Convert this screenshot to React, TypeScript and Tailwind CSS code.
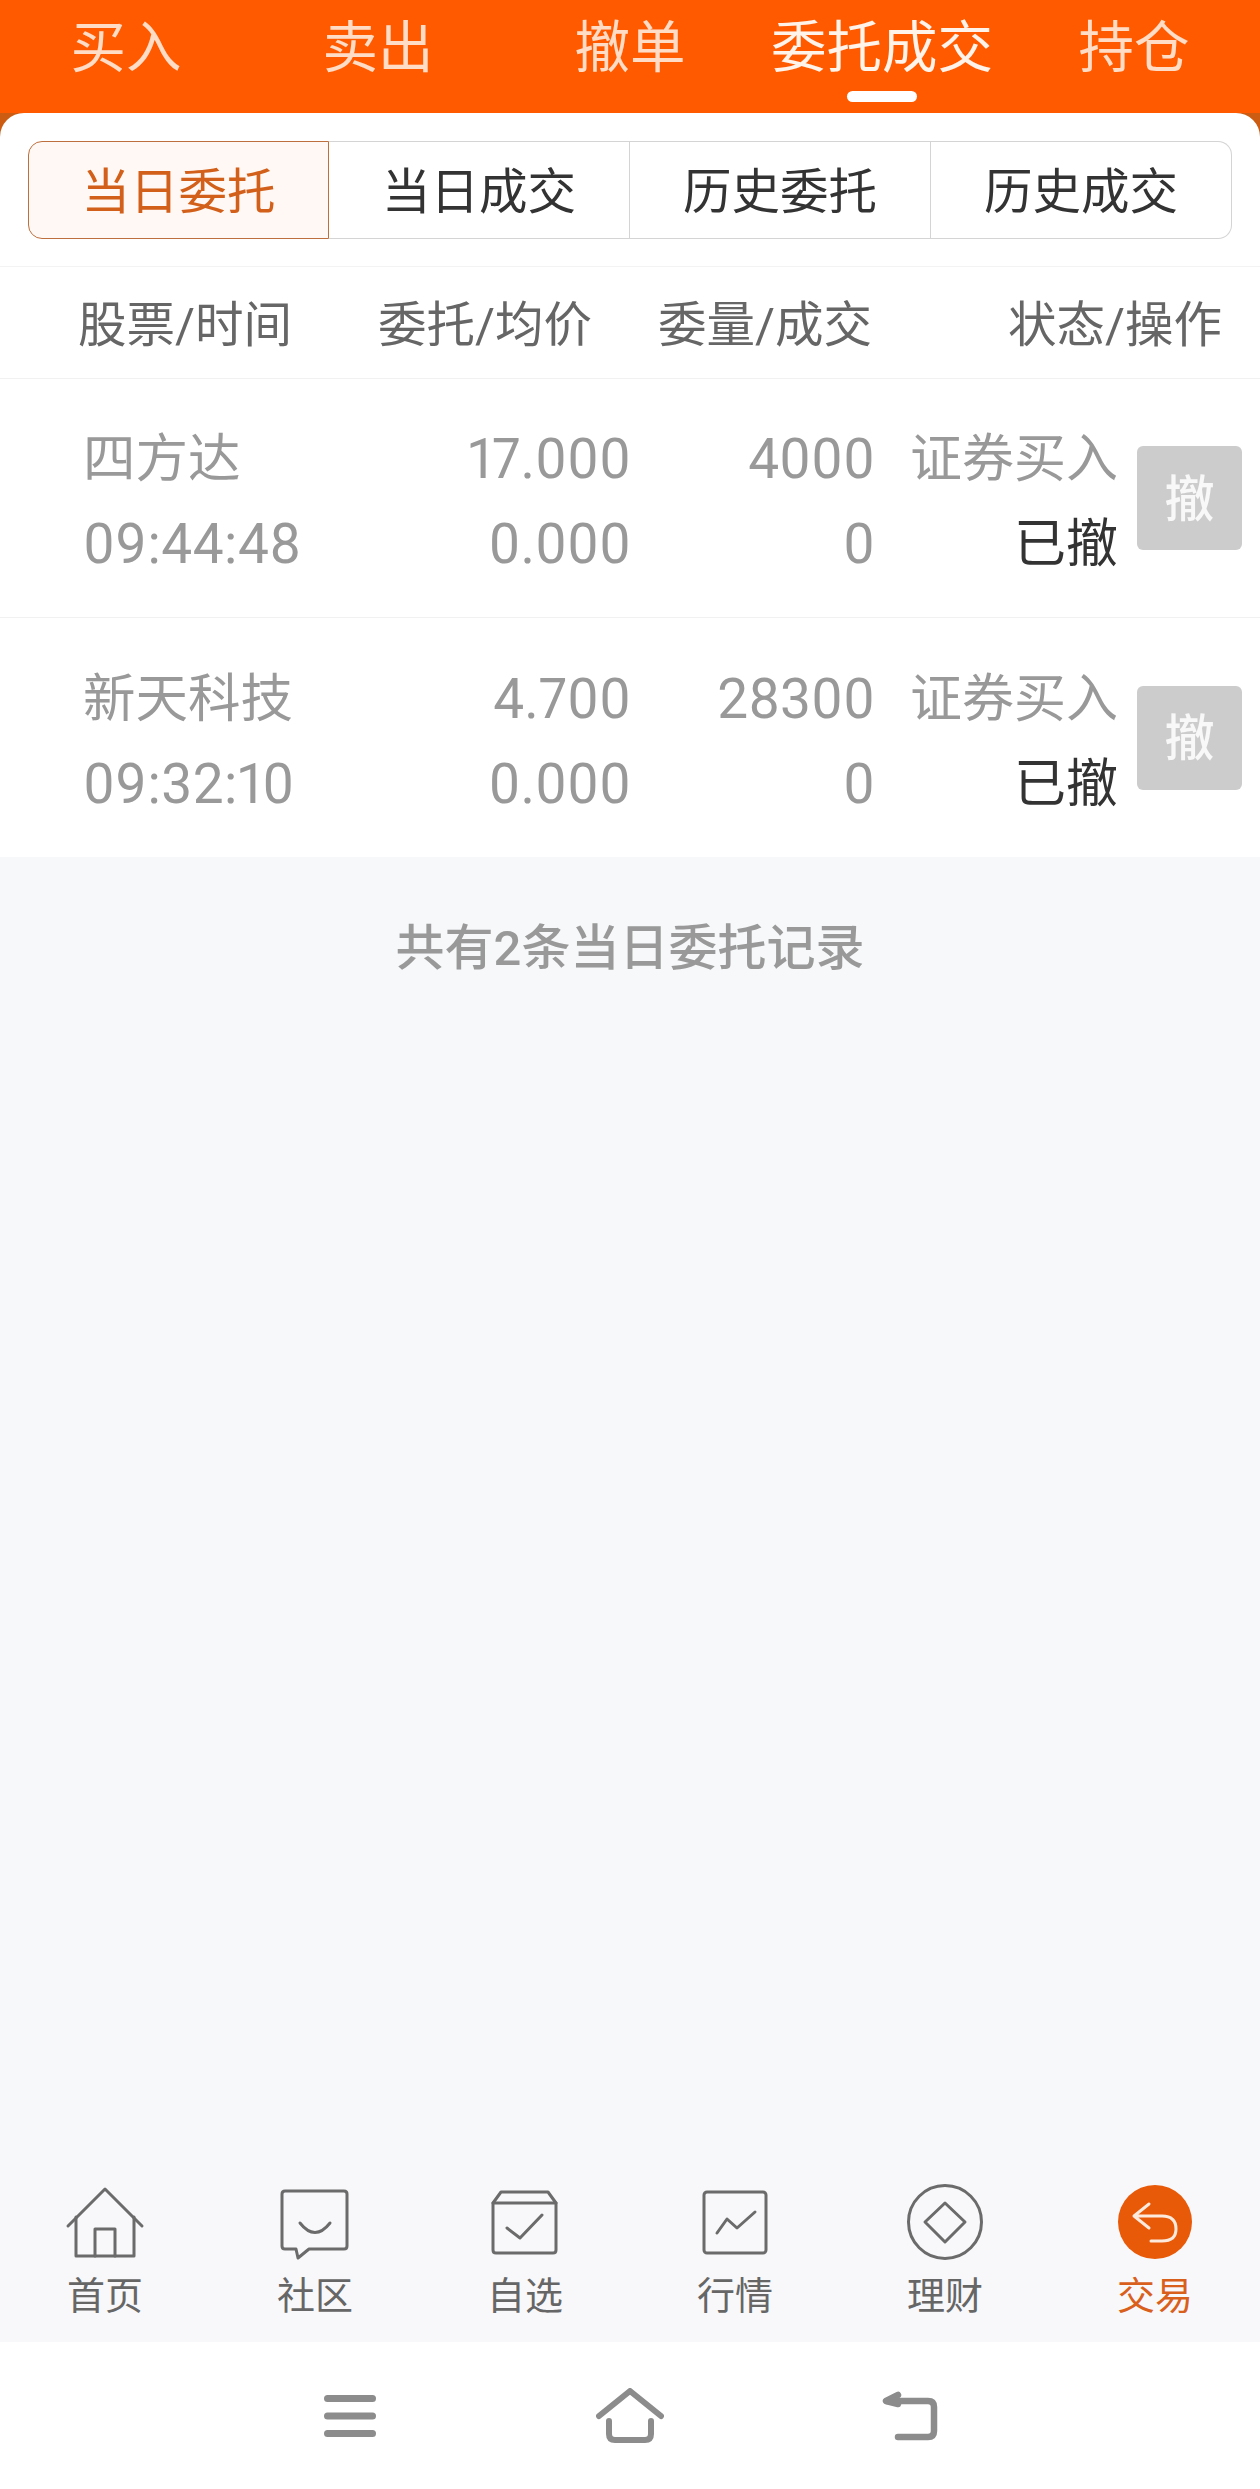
import React from "react";

const topTabs = ["买入", "卖出", "撤单", "委托成交", "持仓"];
const subTabs = ["当日委托", "当日成交", "历史委托", "历史成交"];
const rows = [
  { name: "四方达", time: "09:44:48", price: "17.000", avg: "0.000", qty: "4000", done: "0" },
  { name: "新天科技", time: "09:32:10", price: "4.700", avg: "0.000", qty: "28300", done: "0" },
];

const stroke = { fill: "none", stroke: "#6b6b6b", strokeWidth: 3, strokeLinejoin: "round" as const, strokeLinecap: "round" as const };

function HomeIcon() {
  return (
    <svg width="80" height="80" viewBox="0 0 80 80" {...stroke}>
      <path d="M3 45 L40 8 L77 45" />
      <path d="M11 36 V75 H69 V36" />
      <path d="M30 75 V48 H50 V75" />
    </svg>
  );
}
function ChatIcon() {
  return (
    <svg width="80" height="80" viewBox="0 0 80 80" {...stroke}>
      <path d="M10 10 H69 Q72 10 72 13 V65 Q72 68 69 68 H34 L23 77 L21 68 H10 Q7 68 7 65 V13 Q7 10 10 10 Z" />
      <path d="M25 42 Q40 61 55 42" />
    </svg>
  );
}
function BoxIcon() {
  return (
    <svg width="80" height="80" viewBox="0 0 80 80" {...stroke}>
      <path d="M8 22 L16 11 H63 L71 22" />
      <path d="M8 22 H71 V69 Q71 72 68 72 H11 Q8 72 8 69 Z" />
      <path d="M22 47 L35 57 L57 34" />
    </svg>
  );
}
function ChartIcon() {
  return (
    <svg width="80" height="80" viewBox="0 0 80 80" {...stroke}>
      <rect x="9" y="11" width="62" height="61" rx="3" />
      <path d="M22 52 L32 38 L42 47 L60 31" />
    </svg>
  );
}
function DiamondIcon() {
  return (
    <svg width="80" height="80" viewBox="0 0 80 80" {...stroke}>
      <circle cx="40" cy="41" r="36.5" />
      <path d="M40 22 L60 41 L40 61 L20 41 Z" />
    </svg>
  );
}
function TradeIcon() {
  return (
    <svg width="80" height="80" viewBox="0 0 80 80" fill="none">
      <circle cx="40" cy="41" r="37" fill="#e85a08" />
      <path d="M34 23 L19 35 L34 47 M19 35 H47 Q61 35 61 48 Q61 60 47 60 H36" stroke="#fdeadd" strokeWidth="3" strokeLinecap="round" strokeLinejoin="round" />
    </svg>
  );
}

const navItems = [
  { label: "首页", icon: <HomeIcon /> },
  { label: "社区", icon: <ChatIcon /> },
  { label: "自选", icon: <BoxIcon /> },
  { label: "行情", icon: <ChartIcon /> },
  { label: "理财", icon: <DiamondIcon /> },
  { label: "交易", icon: <TradeIcon />, active: true },
];

export default function App() {
  return (
    <div className="w-[1260px] h-[2489px] flex flex-col bg-[#f7f8fa] font-['Roboto','Noto_Sans_CJK_SC',sans-serif] proportional-nums overflow-hidden">
      <div className="h-[113px] bg-[#ff5a00] grid grid-cols-5 shrink-0">
        {topTabs.map((t, i) => (
          <div key={t} className="relative flex justify-center pt-[15px]">
            <span className={`text-[55.5px] leading-[68px] ${i === 3 ? "text-[#fff3ea]" : "text-[#ffdcc6]"}`}>{t}</span>
            {i === 3 && <div className="absolute top-[91px] left-[91px] w-[70px] h-[11px] rounded-full bg-white" />}
          </div>
        ))}
      </div>

      <div className="bg-[#cc5c12] shrink-0">
        <div className="bg-white rounded-t-[24px] h-[154px] px-[28px] pt-[28px] border-b border-[#f3f3f3]">
          <div className="grid grid-cols-4 h-[98px] w-[1204px]">
            {subTabs.map((t, i) => (
              <div
                key={t}
                className={`flex items-center justify-center text-[48.5px] pt-[6px] ${
                  i === 0
                    ? "rounded-l-[14px] border border-[#bd6f3e] bg-[#fff8f4] text-[#d2601a]"
                    : i === 3
                    ? "rounded-r-[14px] border border-l-0 border-[#d4d4d4] text-[#333333]"
                    : "border-y border-r border-[#d4d4d4] text-[#333333]"
                }`}
              >
                {t}
              </div>
            ))}
          </div>
        </div>
      </div>

      <div className="bg-white h-[112px] border-b border-[#f1f1f1] flex items-center pt-[8px] text-[48.5px] text-[#666666] shrink-0">
        <div className="w-[378px] pl-[78px]">股票/时间</div>
        <div className="w-[280px]">委托/均价</div>
        <div className="w-[350px]">委量/成交</div>
        <div>状态/操作</div>
      </div>

      <div className="bg-white shrink-0">
        {rows.map((r, i) => (
          <div key={r.name} className={`flex h-[239px] items-center pt-[8px] ${i === 0 ? "border-b border-[#f1f1f1]" : ""}`}>
            <div className="w-[430px] pl-[83px] text-[#999999]">
              <div className="text-[52.5px] leading-[85px]">{r.name}</div>
              <div className="text-[55px] leading-[85px] tracking-[0.5px]">{r.time}</div>
            </div>
            <div className="w-[201px] text-right text-[55px] leading-[85px] text-[#999999]">
              <div>{r.price}</div>
              <div>{r.avg}</div>
            </div>
            <div className="w-[244px] text-right text-[55px] leading-[85px] text-[#999999]">
              <div>{r.qty}</div>
              <div>{r.done}</div>
            </div>
            <div className="w-[243px] text-right text-[52px] leading-[85px]">
              <div className="text-[#999999]">证券买入</div>
              <div className="text-[#333333]">已撤</div>
            </div>
            <div className="ml-[19px] -mt-[8px] w-[105px] h-[104px] rounded-[6px] bg-[#cccccc] text-[#f8f8f8] text-[50px] font-medium pt-[4px] flex items-center justify-center">撤</div>
          </div>
        ))}
      </div>

      <div className="flex-1 flex justify-center pt-[60px] text-[49px] leading-[64px] font-medium text-[#999999]">共有2条当日委托记录</div>

      <div className="h-[172px] shrink-0 bg-[#f8f8fa] grid grid-cols-6 pt-[11px]">
        {navItems.map((n) => (
          <div key={n.label} className="flex flex-col items-center">
            {n.icon}
            <span className={`text-[38px] leading-[50px] mt-[10px] ${n.active ? "text-[#d9601c]" : "text-[#666666]"}`}>{n.label}</span>
          </div>
        ))}
      </div>

      <div className="h-[147px] shrink-0 bg-white flex justify-center items-center">
        <div className="w-[280px] flex justify-center">
          <svg width="52" height="42" viewBox="0 0 52 42" fill="#8c8c8c">
            <rect x="0" y="0" width="52" height="7" rx="3.5" />
            <rect x="0" y="17.5" width="52" height="7" rx="3.5" />
            <rect x="0" y="35" width="52" height="7" rx="3.5" />
          </svg>
        </div>
        <div className="w-[280px] flex justify-center">
          <svg width="68" height="56" viewBox="0 0 68 56" fill="none" stroke="#8c8c8c" strokeWidth="6" strokeLinecap="round" strokeLinejoin="round">
            <path d="M3 28 L34 3 L65 28" />
            <path d="M13 33 V46 Q13 52 19 52 H49 Q55 52 55 46 V33" />
          </svg>
        </div>
        <div className="w-[280px] flex justify-center">
          <svg width="56" height="50" viewBox="0 0 56 50" fill="none" stroke="#8c8c8c" strokeWidth="6.5" strokeLinecap="round" strokeLinejoin="round">
            <path d="M16 4 L4 10 L16 13" />
            <path d="M5 10 H46 Q52 10 52 16 V40 Q52 46 46 46 H16" />
          </svg>
        </div>
      </div>
    </div>
  );
}
